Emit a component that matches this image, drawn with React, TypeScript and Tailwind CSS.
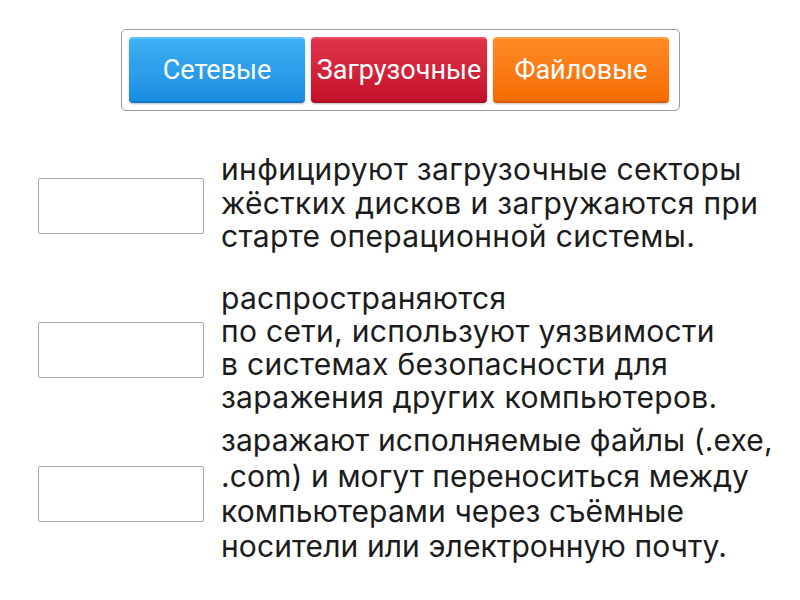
import React from 'react';

const categories = [
  { label: 'Сетевые', cls: 'bg-gradient-to-b from-[#3db0f5] to-[#1a8de0] border-t-[#5cc0fa] border-b-[#0f78c8]' },
  { label: 'Загрузочные', cls: 'bg-gradient-to-b from-[#e0334a] to-[#c40f2a] border-t-[#ee4a60] border-b-[#a80a22]' },
  { label: 'Файловые', cls: 'bg-gradient-to-b from-[#ff8a22] to-[#f56c00] border-t-[#ffa040] border-b-[#d85e00]' },
];

const items = [
  {
    lines: ['инфицируют загрузочные секторы', 'жёстких дисков и загружаются при', 'старте операционной системы.'],
    size: 'leading-[33.5px] tracking-[0.35px] pb-[5px]',
  },
  {
    lines: ['распространяются', 'по сети, используют уязвимости', 'в системах безопасности для', 'заражения других компьютеров.'],
    size: 'leading-[33px] tracking-[0.3px] pb-[5px]',
  },
  {
    lines: ['заражают исполняемые файлы (.exe,', '.com) и могут переноситься между', 'компьютерами через съёмные', 'носители или электронную почту.'],
    size: 'leading-[35.3px] tracking-[0.1px]',
  },
];

export default function App() {
  return (
    <div className="w-[800px] h-[600px] bg-white overflow-hidden font-['Inter',sans-serif] text-[#1c1c1c]">
      {/* ── Category tiles ─────────────────────────────────────────── */}
      <div className="ml-[121px] mt-[29px] w-[559px] h-[82px] border border-[#9a9a9a] rounded-[5px] p-[7px] flex gap-[6px]">
        {categories.map((c) => (
          <div
            key={c.label}
            className={`w-[176px] h-[66px] rounded-[4px] border-t-2 border-b-2 shadow-[0_1px_2px_rgba(0,0,0,0.25)] flex items-center justify-center text-white text-[27px] font-['Roboto',sans-serif] whitespace-nowrap ${c.cls}`}
          >
            {c.label}
          </div>
        ))}
      </div>

      {/* ── Drop rows ──────────────────────────────────────────────── */}
      <div className="mt-[23px] flex flex-col">
        {items.map((item, i) => (
          <div key={i} className="h-[144px] flex items-center">
            <div className="ml-[38px] w-[166px] h-[56px] border border-[#ababab] rounded-[2px] bg-white" />
            <div className={`ml-[17px] whitespace-nowrap text-[30px] ${item.size}`}>
              {item.lines.map((l) => (
                <div key={l}>{l}</div>
              ))}
            </div>
          </div>
        ))}
      </div>
    </div>
  );
}
